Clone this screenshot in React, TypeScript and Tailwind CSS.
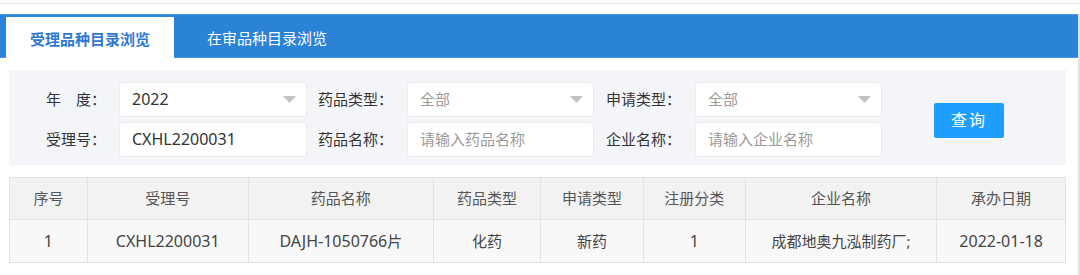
import React from "react";

const font = { fontFamily: '"Noto Sans", "Noto Sans CJK SC", sans-serif' };

function Caret() {
  return (
    <svg width="13" height="7" viewBox="0 0 13 7" className="shrink-0">
      <path d="M0 0 L13 0 L6.5 7 Z" fill="#c2c2c2" />
    </svg>
  );
}

function SelectBox({ value, placeholder, w }: { value: React.ReactNode; placeholder?: boolean; w: string }) {
  return (
    <div className={`${w} h-[35px] bg-white border border-[#ebebeb] rounded-[3px] flex items-center justify-between pl-[12px] pr-[10px]`}>
      <span className={placeholder ? "text-[#9a9a9a]" : "text-[#333]"}>{value}</span>
      <Caret />
    </div>
  );
}

function InputBox({ value, placeholder, w }: { value: React.ReactNode; placeholder?: boolean; w: string }) {
  return (
    <div className={`${w} h-[35px] bg-white border border-[#ebebeb] rounded-[3px] flex items-center pl-[12px]`}>
      <span className={placeholder ? "text-[#9a9a9a]" : "text-[#333]"}>{value}</span>
    </div>
  );
}

const L = ({ children }: { children: React.ReactNode }) => <span className="text-[16px]">{children}</span>;

const cols: { w: string; h: string; v: React.ReactNode }[] = [
  { w: "w-[77px]", h: "序号", v: <L>1</L> },
  { w: "w-[161px]", h: "受理号", v: <L>CXHL2200031</L> },
  { w: "w-[186px]", h: "药品名称", v: <><L>DAJH-1050766</L>片</> },
  { w: "w-[107px]", h: "药品类型", v: "化药" },
  { w: "w-[103px]", h: "申请类型", v: "新药" },
  { w: "w-[102px]", h: "注册分类", v: <L>1</L> },
  { w: "w-[192px]", h: "企业名称", v: "成都地奥九泓制药厂;" },
  { w: "w-[129px]", h: "承办日期", v: <L>2022-01-18</L> },
];

export default function App() {
  return (
    <div className="w-[1080px] h-[275px] bg-white overflow-hidden text-[15px]" style={font}>
      <div className="h-[3px]" />
      <div className="h-[1px] bg-[#e6e6e6]" />
      <div className="flex">
        <div className="w-[1078px]">
          <div className="h-[10px]" />
          {/* blue tab bar */}
          <div className="h-[44px] bg-[#2a83d7] border-t border-b border-[#4a98e4] flex items-end pl-[6px]">
            <div className="w-[168px] h-[41px] -mb-[1px] bg-white flex items-center justify-center pt-[4px] font-bold text-[#2f78cf]">
              受理品种目录浏览
            </div>
            <div className="h-[41px] flex items-center pl-[33px] pt-[4px] text-white">
              在审品种目录浏览
            </div>
          </div>
          {/* filter panel */}
          <div className="ml-[9px] mt-[12px] w-[1057px] h-[95px] bg-[#f4f5f9] flex items-center pt-[3px]">
            <div className="flex flex-col gap-[5px]">
              <div className="flex items-center h-[35px]">
                <div className="w-[97px] text-right text-[#333]">年　度：</div>
                <div className="ml-[13px]"><SelectBox w="w-[188px]" value={<L>2022</L>} /></div>
                <div className="ml-[11px] w-[89px] text-[#333]">药品类型：</div>
                <SelectBox w="w-[187px]" value="全部" placeholder />
                <div className="ml-[12px] w-[89px] text-[#333]">申请类型：</div>
                <SelectBox w="w-[187px]" value="全部" placeholder />
              </div>
              <div className="flex items-center h-[35px]">
                <div className="w-[97px] text-right text-[#333]">受理号：</div>
                <div className="ml-[13px]"><InputBox w="w-[188px]" value={<L>CXHL2200031</L>} /></div>
                <div className="ml-[11px] w-[89px] text-[#333]">药品名称：</div>
                <InputBox w="w-[187px]" value="请输入药品名称" placeholder />
                <div className="ml-[12px] w-[89px] text-[#333]">企业名称：</div>
                <InputBox w="w-[187px]" value="请输入企业名称" placeholder />
              </div>
            </div>
            <button className="ml-[52px] mt-[2px] w-[70px] h-[35px] bg-[#1e9fff] rounded-[2px] text-white text-[16px] tracking-[2px]">
              查询
            </button>
          </div>
          {/* table */}
          <div className="ml-[9px] mt-[12px] w-[1057px] border border-[#e2e2e2]">
            <div className="flex h-[42px] bg-[#f2f2f2] border-b border-[#e2e2e2]">
              {cols.map((c, i) => (
                <div
                  key={i}
                  className={`${c.w} flex items-center justify-center text-[#555] ${i > 0 ? "border-l border-[#e2e2e2]" : ""}`}
                >
                  {c.h}
                </div>
              ))}
            </div>
            <div className="flex h-[42px] bg-[#f8f8f8]">
              {cols.map((c, i) => (
                <div
                  key={i}
                  className={`${c.w} flex items-center justify-center text-[#444] ${i > 0 ? "border-l border-[#e2e2e2]" : ""}`}
                >
                  {c.v}
                </div>
              ))}
            </div>
          </div>
        </div>
        <div className="w-[2px] mt-[10px] h-[300px] bg-[#e3e3e3]" />
      </div>
    </div>
  );
}
